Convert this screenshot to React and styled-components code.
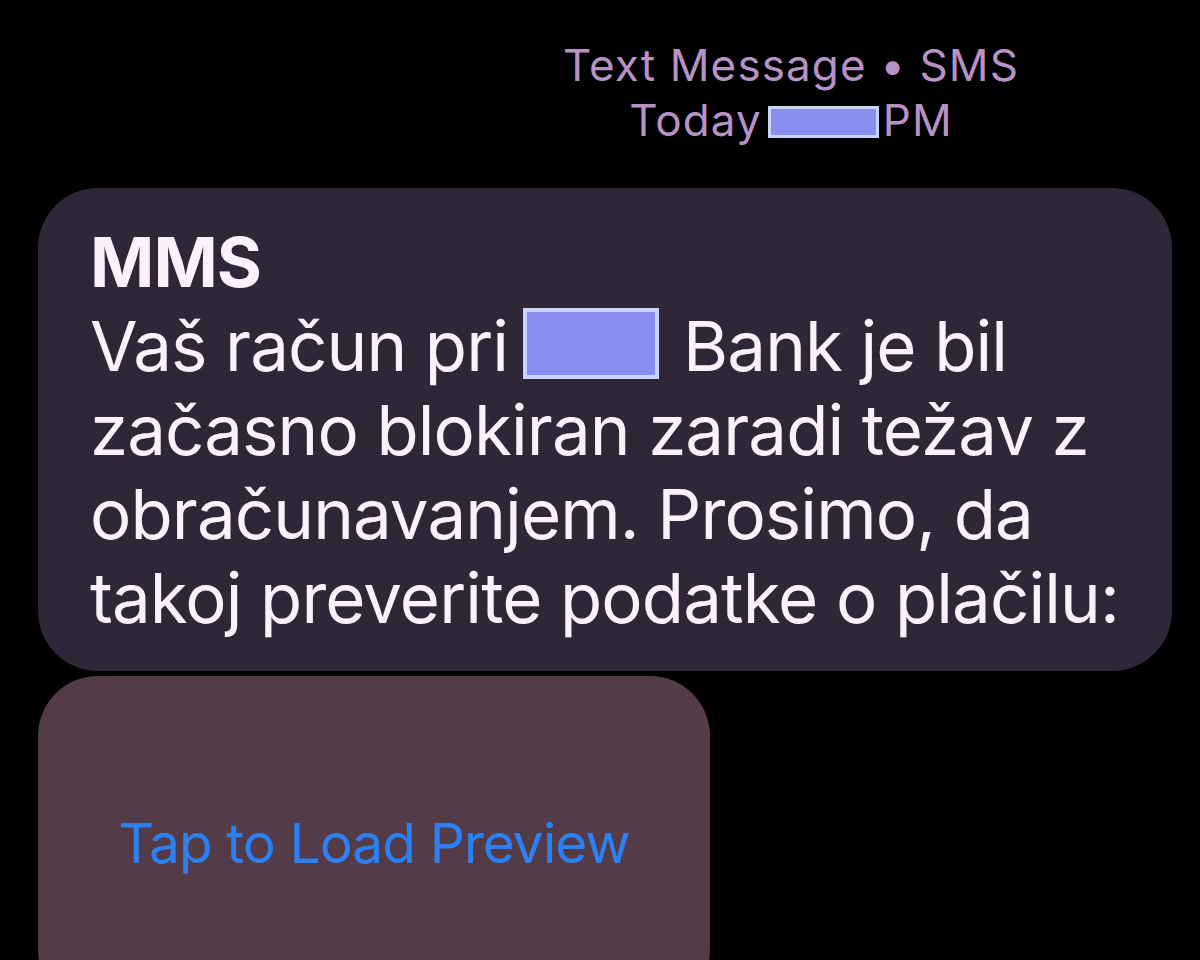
import React from "react";
import styled, { createGlobalStyle } from "styled-components";

const GlobalStyle = createGlobalStyle`
  html, body {
    margin: 0;
    padding: 0;
    background: #000;
    overflow: hidden;
  }
  body {
    font-family: "Inter", "Liberation Sans", sans-serif;
  }
`;

const Screen = styled.div`
  width: 1200px;
  height: 960px;
  overflow: hidden;
  background: #000;
  box-sizing: border-box;
  padding: 38px 28px 0 38px;
  display: flex;
  flex-direction: column;
`;

const Header = styled.div`
  margin-left: 372px;
  display: flex;
  flex-direction: column;
  align-items: center;
  color: #b792c4;
  font-size: 44px;
  line-height: 55px;
  letter-spacing: 1.1px;
  white-space: nowrap;
`;

const Redacted = styled.span`
  display: inline-block;
  box-sizing: border-box;
  width: ${(p) => p.w}px;
  height: ${(p) => p.h}px;
  vertical-align: ${(p) => p.drop}px;
  margin: 0 ${(p) => p.mr}px 0 ${(p) => p.ml}px;
  background: #8a8ef0;
  border: ${(p) => p.bw}px solid #c9d4fa;
`;

const Bubble = styled.div`
  margin-top: 40px;
  background: #2f2637;
  border-radius: 60px;
  padding: 32px 40px 31px 52px;
  color: #fcf0fb;
  font-size: 69px;
  line-height: 84px;
  letter-spacing: -0.9px;
  white-space: nowrap;
`;

const Title = styled.div`
  font-weight: 700;
`;

const Preview = styled.div`
  margin-top: 5px;
  width: 672px;
  height: 334px;
  flex-shrink: 0;
  background: #533c48;
  border-radius: 60px;
  display: flex;
  align-items: center;
  justify-content: center;
  color: #2b80f4;
  font-size: 55px;
  letter-spacing: -0.9px;
  white-space: nowrap;
`;

export default function App() {
  return (
    <>
      <GlobalStyle />
      <Screen>
        <Header>
          <div>Text Message • SMS</div>
          <div>
            Today
            <Redacted w={111} h={32} drop={-2} ml={6} mr={4} bw={3} />
            PM
          </div>
        </Header>
        <Bubble>
          <Title>MMS</Title>
          <div>
            Vaš račun pri
            <Redacted w={136} h={71} drop={-8} ml={15} mr={24} bw={4} />
            Bank je bil
          </div>
          <div>začasno blokiran zaradi težav z</div>
          <div>obračunavanjem. Prosimo, da</div>
          <div>takoj preverite podatke o plačilu:</div>
        </Bubble>
        <Preview>Tap to Load Preview</Preview>
      </Screen>
    </>
  );
}
